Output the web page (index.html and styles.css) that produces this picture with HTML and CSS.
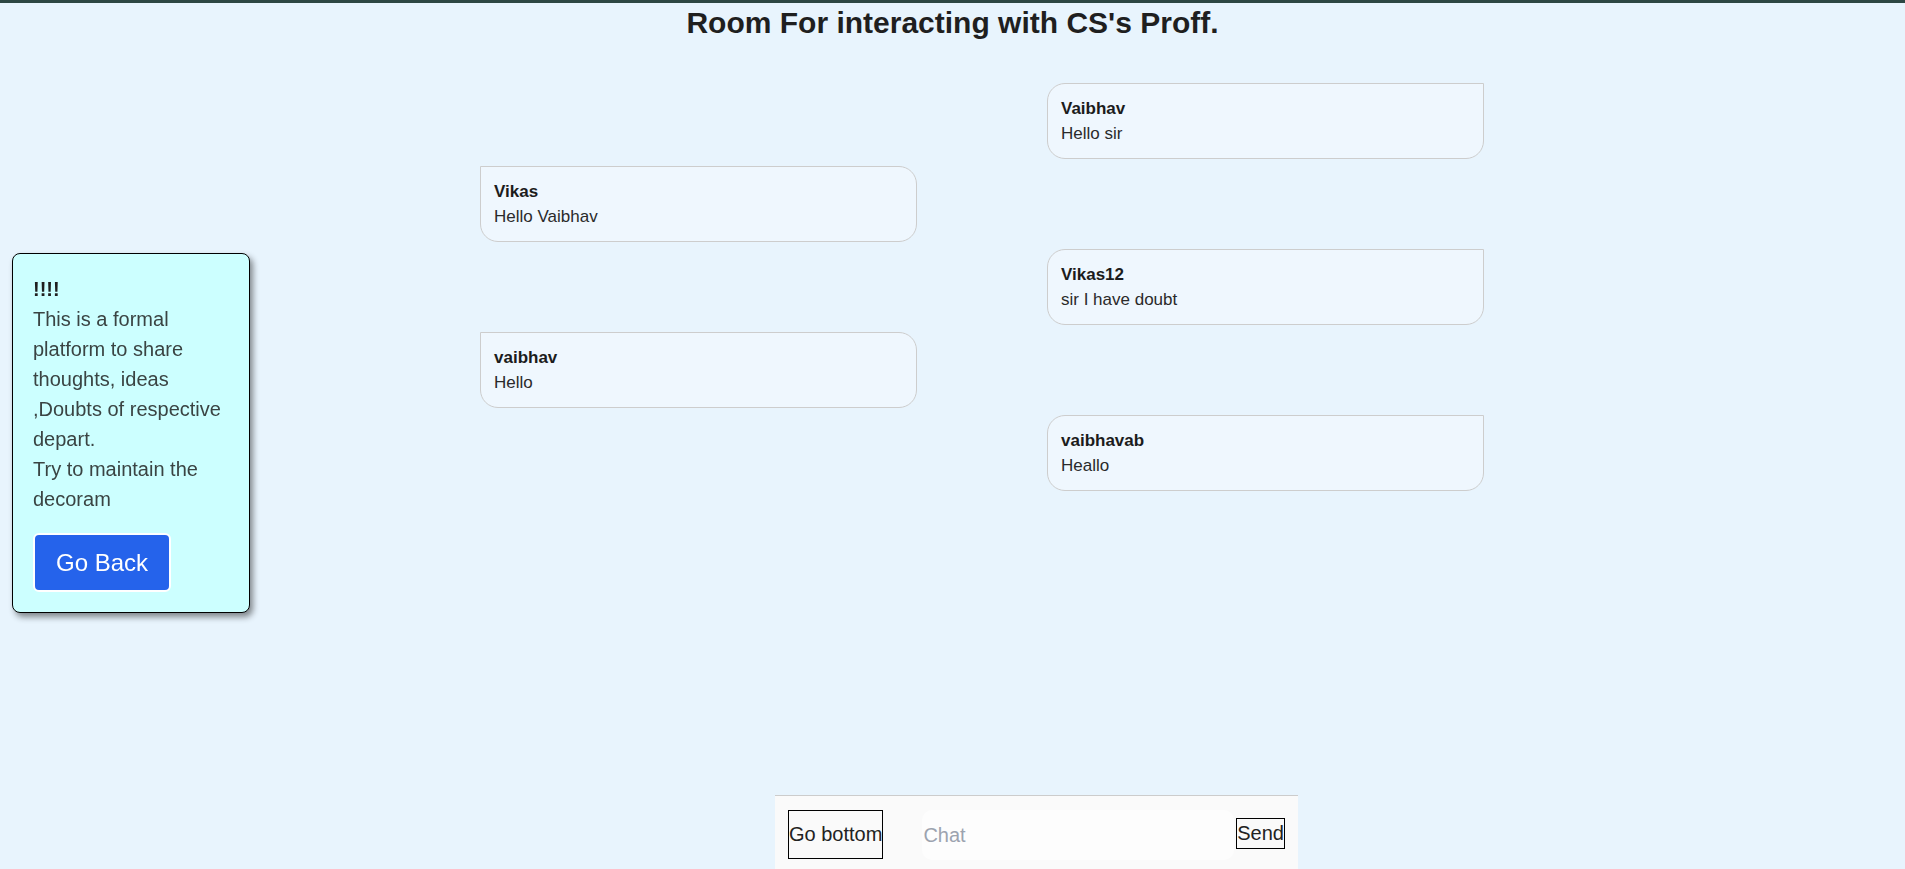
FILE: index.html
```html
<!DOCTYPE html>
<html lang="en">
<head>
<meta charset="utf-8">
<title>Room For interacting with CS's Proff.</title>
<link rel="stylesheet" href="styles.css">
</head>
<body>
  <header class="topbar">
    <h1 class="title">Room For interacting with CS's Proff.</h1>
  </header>

  <aside class="notice">
    <div class="notice__text"><strong class="notice__bang">!!!!</strong><br>This is a formal platform to share thoughts, ideas ,Doubts of respective depart.<br>Try to maintain the decoram</div>
    <button class="notice__back" type="button">Go Back</button>
  </aside>

  <main class="chat">
    <div class="msg msg--right"><div class="msg__name">Vaibhav</div><div class="msg__text">Hello sir</div></div>
    <div class="msg msg--left"><div class="msg__name">Vikas</div><div class="msg__text">Hello Vaibhav</div></div>
    <div class="msg msg--right"><div class="msg__name">Vikas12</div><div class="msg__text">sir I have doubt</div></div>
    <div class="msg msg--left"><div class="msg__name">vaibhav</div><div class="msg__text">Hello</div></div>
    <div class="msg msg--right"><div class="msg__name">vaibhavab</div><div class="msg__text">Heallo</div></div>
  </main>

  <footer class="composer">
    <button class="composer__bottom" type="button">Go bottom</button>
    <input class="composer__input" type="text" placeholder="Chat">
    <button class="composer__send" type="button">Send</button>
  </footer>
</body>
</html>
```

FILE: styles.css
```css
html, body {
  height: 100%;
}

body {
  margin: 0;
  box-sizing: border-box;
  height: 100vh;
  overflow: hidden;
  display: flex;
  flex-direction: column;
  background: #e8f4fd;
  border-top: 3px solid #2d4743;
  font-family: "Liberation Sans", Arial, sans-serif;
  color: #222;
}

.topbar {
  flex: none;
}

.title {
  margin: 2px 0 0;
  font-size: 30px;
  line-height: 35px;
  font-weight: bold;
  text-align: center;
  color: #1f1f1f;
}

/* floating info panel */
.notice {
  position: fixed;
  left: 12px;
  top: 50%;
  transform: translateY(-50%);
  margin-top: -2px;
  width: 238px;
  box-sizing: border-box;
  padding: 20px;
  border: 1px solid #000;
  border-radius: 8px;
  background: #ccffff;
  box-shadow: 3px 4px 6px rgba(0, 0, 0, 0.45);
}

.notice__text {
  font-size: 20px;
  line-height: 30px;
  color: #3a4443;
}

.notice__bang {
  color: #1f1f1f;
}

.notice__back {
  display: block;
  margin-top: 19px;
  padding: 14px 21px;
  border: 2px solid #fff;
  border-radius: 6px;
  background: #2563eb;
  color: #fff;
  font-family: "Liberation Sans", Arial, sans-serif;
  font-size: 24px;
  line-height: 27px;
}

/* chat messages */
.chat {
  flex: 1;
  display: flex;
  flex-direction: column;
  gap: 7px;
  width: 1004px;
  margin: 43px 0 0 480px;
}

.msg {
  box-sizing: border-box;
  width: 437px;
  padding: 12px 13px;
  border: 1px solid #cdcdcd;
  background: #eff7fe;
  font-size: 17px;
  line-height: 25px;
}

.msg--left {
  align-self: flex-start;
  border-radius: 0 18px 18px 18px;
}

.msg--right {
  align-self: flex-end;
  border-radius: 18px 0 18px 18px;
}

.msg__name {
  font-weight: bold;
  color: #1c1c1c;
}

.msg__text {
  color: #2a2a2a;
}

/* composer bar */
.composer {
  flex: none;
  display: flex;
  align-items: flex-start;
  box-sizing: border-box;
  width: 523px;
  margin-left: 775px;
  padding: 14px 13px 9px;
  background: #fafafa;
  border-top: 1px solid #cccccc;
}

.composer__bottom {
  flex: none;
  height: 49px;
  padding: 0;
  margin-right: 39px;
  white-space: nowrap;
  border: 1px solid #000;
  background: transparent;
  color: #222;
  font-family: "Liberation Sans", Arial, sans-serif;
  font-size: 20px;
}

.composer__input {
  flex: 1;
  min-width: 0;
  height: 50px;
  box-sizing: border-box;
  padding: 0 1px;
  border: none;
  border-radius: 10px;
  background: #fdfdfd;
  outline: none;
  color: #222;
  font-family: "Liberation Sans", Arial, sans-serif;
  font-size: 20px;
}

.composer__input::placeholder {
  color: #9ca3af;
}

.composer__send {
  flex: none;
  margin: 8px 0 0 2px;
  padding: 3px 0;
  white-space: nowrap;
  border: 1px solid #000;
  background: transparent;
  color: #222;
  font-family: "Liberation Sans", Arial, sans-serif;
  font-size: 20px;
  line-height: 23px;
}
```
